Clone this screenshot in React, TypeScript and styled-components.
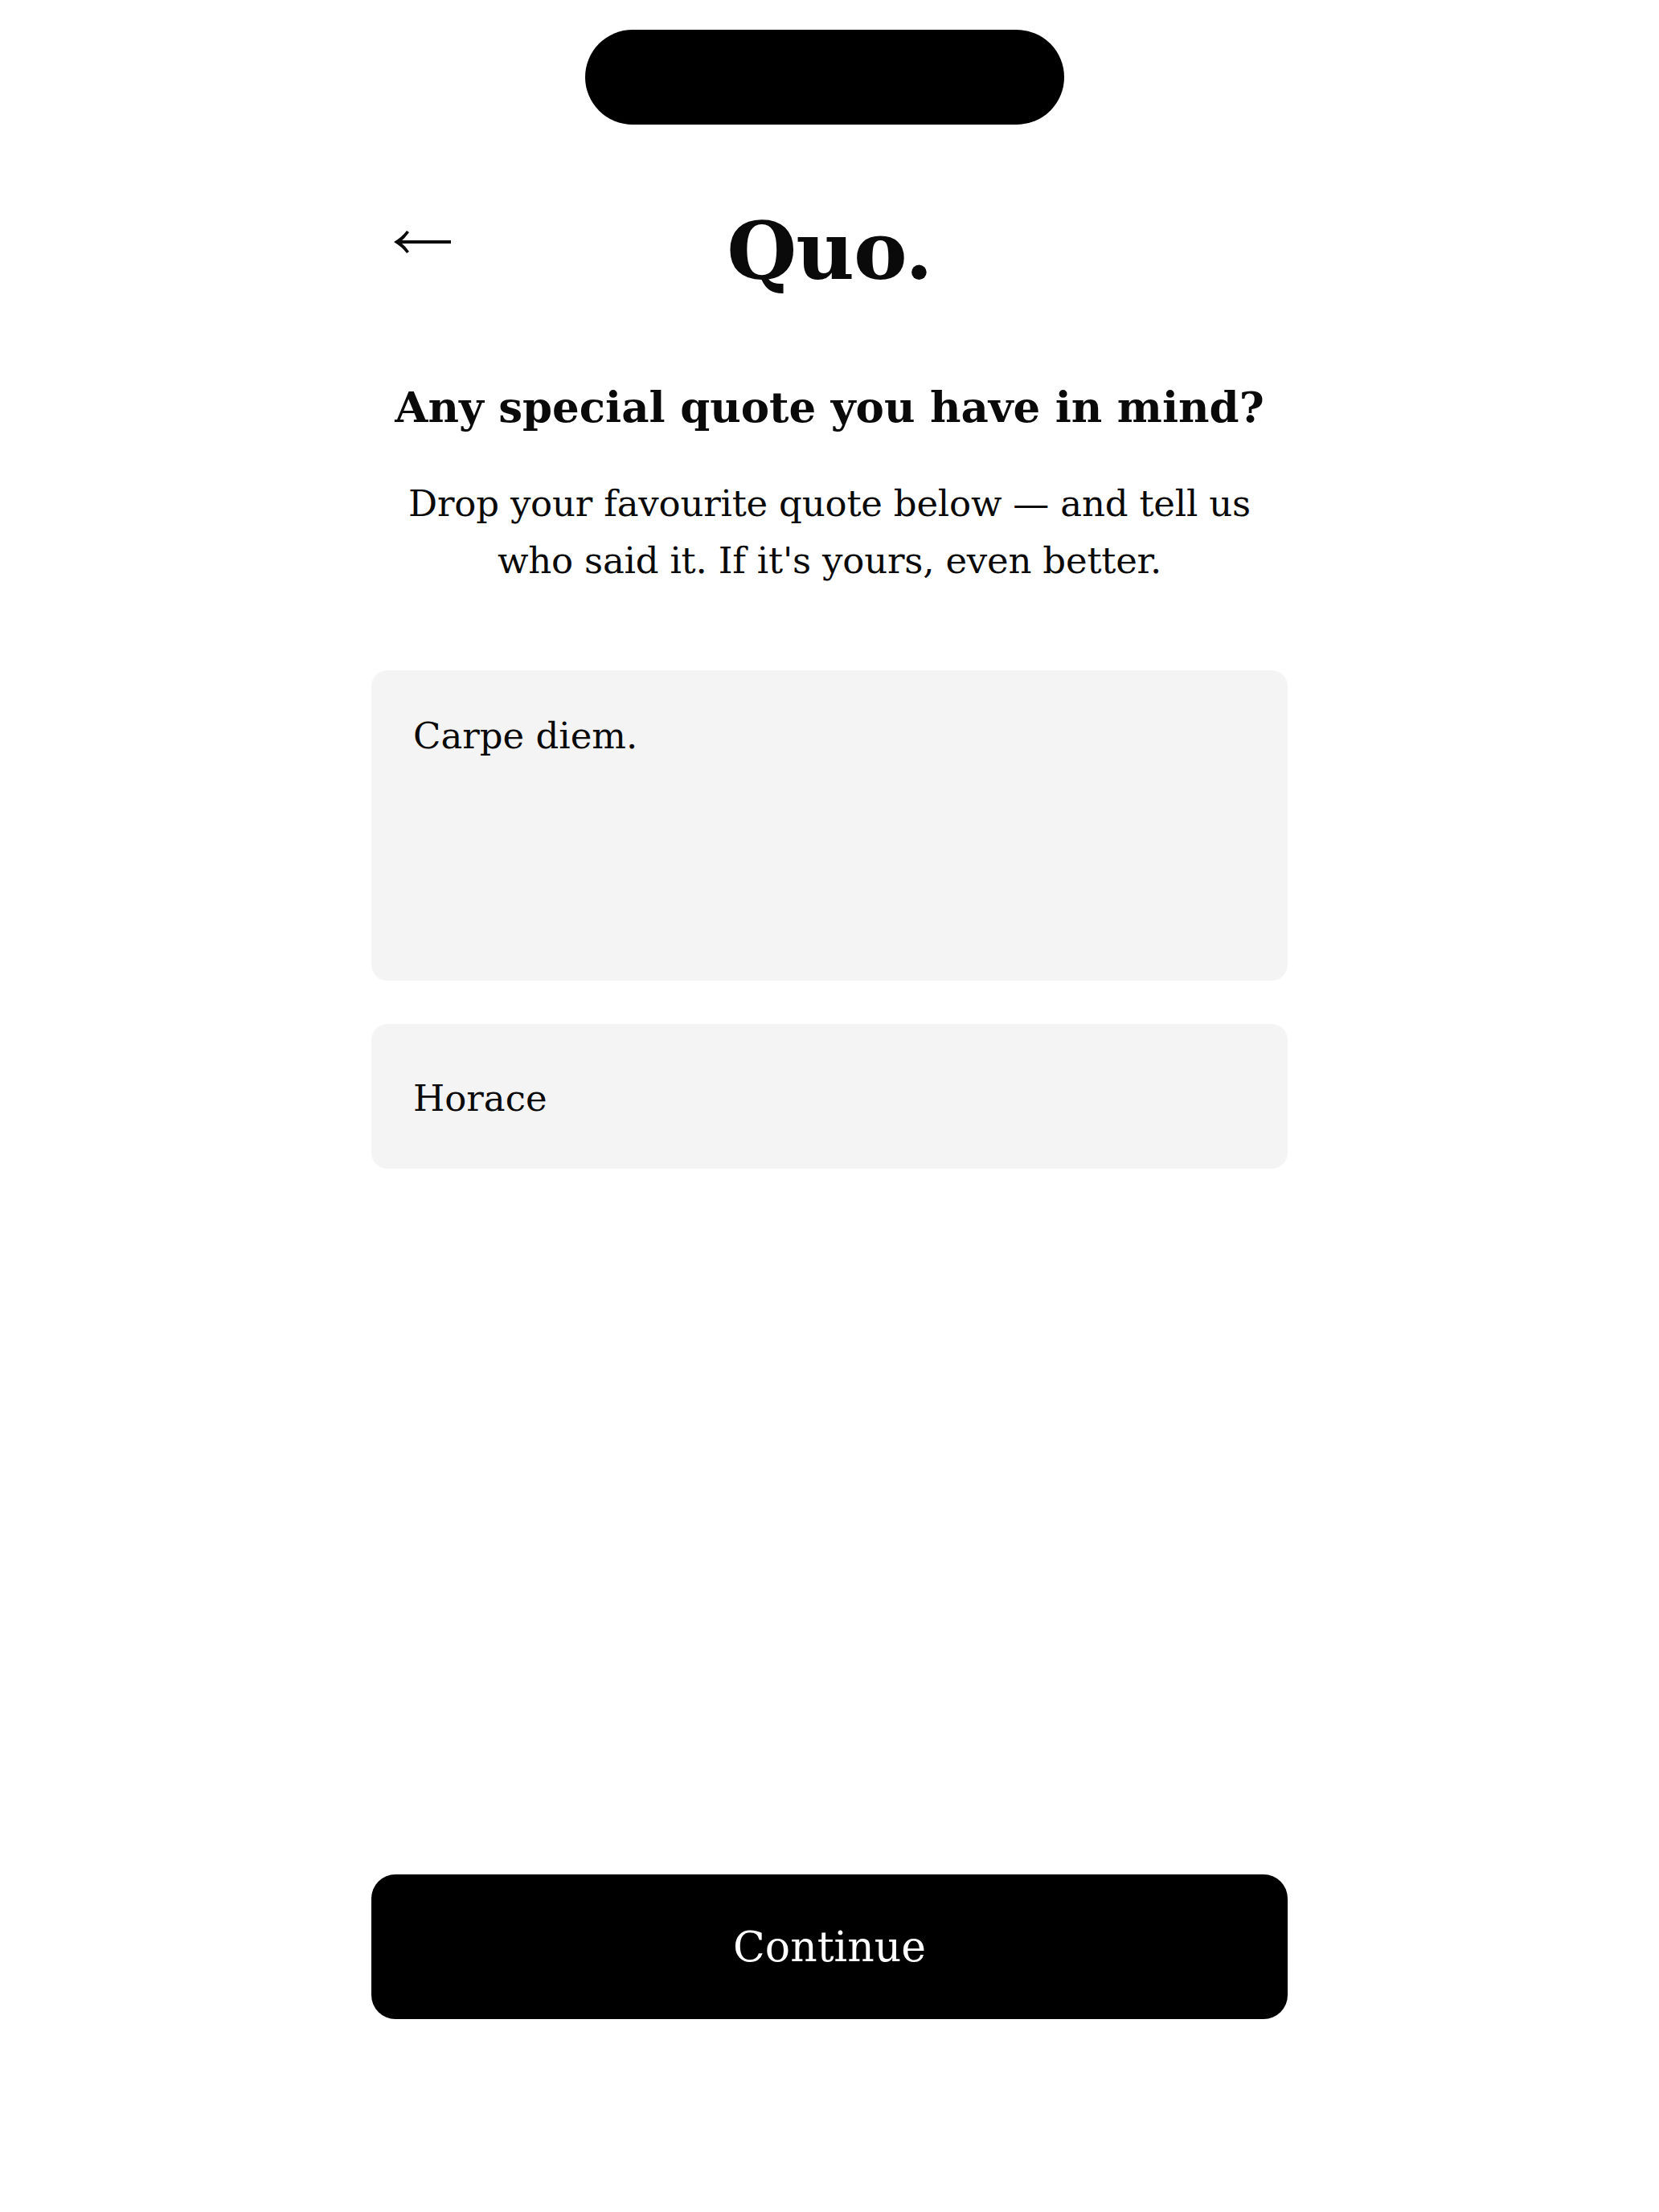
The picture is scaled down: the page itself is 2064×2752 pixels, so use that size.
import React from 'react';
import styled, { createGlobalStyle } from 'styled-components';

const GlobalStyle = createGlobalStyle`
  * {
    box-sizing: border-box;
  }
  html, body {
    margin: 0;
    padding: 0;
    background: #ffffff;
  }
  body {
    font-family: 'DejaVu Serif', 'Liberation Serif', serif;
    color: #0a0a0a;
  }
`;

const Page = styled.div`
  min-height: 2752px;
  display: flex;
  flex-direction: column;
  align-items: center;
  padding: 37px 0 240px;
  background: #ffffff;
`;

const Island = styled.div`
  width: 596px;
  height: 118px;
  margin-right: 12px;
  border-radius: 59px;
  background: #000000;
  flex-shrink: 0;
`;

const Column = styled.main`
  width: 1140px;
  flex: 1;
  display: flex;
  flex-direction: column;
`;

const Header = styled.header`
  display: grid;
  grid-template-columns: 1fr auto 1fr;
  align-items: start;
  margin-top: 107px;
`;

const BackButton = styled.button`
  justify-self: start;
  margin: 24px 0 0 27px;
  padding: 0;
  border: none;
  background: none;
  cursor: pointer;
  display: flex;
  color: #0a0a0a;
`;

const Brand = styled.h1`
  margin: 0;
  font-size: 100px;
  line-height: 1;
  font-weight: 700;
  letter-spacing: -1px;
`;

const Heading = styled.h2`
  margin: 113px 0 0;
  text-align: center;
  font-size: 53px;
  line-height: 1.2;
  font-weight: 700;
`;

const Lead = styled.p`
  margin: 52px 0 0;
  text-align: center;
  font-size: 45px;
  line-height: 71px;
  font-weight: 400;
  letter-spacing: -0.2px;
`;

const Form = styled.form`
  margin-top: 101px;
  display: flex;
  flex-direction: column;
  gap: 54px;
`;

const fieldText = `
  width: 100%;
  border: none;
  outline: none;
  border-radius: 20px;
  background: #f4f4f4;
  font-family: 'DejaVu Serif', 'Liberation Serif', serif;
  font-size: 45px;
  color: #0a0a0a;
`;

const QuoteArea = styled.textarea`
  ${fieldText}
  height: 386px;
  padding: 50px 52px;
  line-height: 1.4;
  resize: none;
`;

const AuthorInput = styled.input`
  ${fieldText}
  height: 180px;
  padding: 6px 52px 0;
`;

const ContinueButton = styled.button`
  margin-top: auto;
  width: 100%;
  height: 180px;
  border: none;
  border-radius: 30px;
  background: #000000;
  color: #ffffff;
  font-family: 'DejaVu Serif', 'Liberation Serif', serif;
  font-size: 52px;
  cursor: pointer;
`;

// thin shaft with a tapered, slightly curved arrowhead
const ArrowLeft = () => (
  <svg width="74" height="30" viewBox="0 0 74 30" fill="none">
    <path d="M7 15 H72" stroke="currentColor" strokeWidth="4" />
    <path
      d="M1 15 Q 11 9 17 1 L 20 3 Q 15 10 9 15 Q 15 20 20 27 L 17 29 Q 11 21 1 15 Z"
      fill="currentColor"
    />
  </svg>
);

export default function App() {
  return (
    <>
      <GlobalStyle />
      <Page>
        <Island />
        <Column>
          <Header>
            <BackButton type="button" aria-label="Back">
              <ArrowLeft />
            </BackButton>
            <Brand>Quo.</Brand>
            <span />
          </Header>

          <Heading>Any special quote you have in mind?</Heading>
          <Lead>
            Drop your favourite quote below — and tell us
            <br />
            who said it. If it's yours, even better.
          </Lead>

          <Form onSubmit={e => e.preventDefault()}>
            <QuoteArea value="Carpe diem." readOnly />
            <AuthorInput value="Horace" readOnly />
          </Form>

          <ContinueButton type="button">Continue</ContinueButton>
        </Column>
      </Page>
    </>
  );
}
